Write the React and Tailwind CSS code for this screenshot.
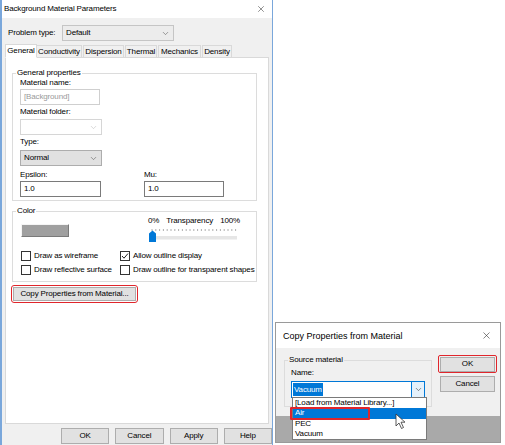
import { X, ChevronDown } from 'lucide-react'

const font = { fontFamily: '"Liberation Sans", "Noto Sans", Arial, sans-serif' }

function Combo({ value, className = '', bg = 'bg-white', disabled }) {
  return (
    <div className={`flex items-center justify-between border border-[#adadad] ${bg} ${className}`}>
      <span className={`pl-[3px] ${disabled ? 'text-[#a0a0a0]' : 'text-black'}`}>{value}</span>
      <ChevronDown size={9} strokeWidth={1.5} className={disabled ? 'mr-[3px] text-[#bdbdbd]' : 'mr-[3px] text-[#555]'} />
    </div>
  )
}

function Input({ value, className = '', muted }) {
  return (
    <div className={`flex items-center border bg-white pl-[3px] ${muted ? 'border-[#cfcfcf] text-[#9a9a9a]' : 'border-[#7a7a7a] text-black'} ${className}`}>
      {value}
    </div>
  )
}

function Check({ label, checked, className = '' }) {
  return (
    <div className={`flex h-[11px] items-center gap-[3px] ${className}`}>
      <div className="flex h-[10px] w-[10px] shrink-0 items-center justify-center border border-[#333] bg-white">
        {checked && (
          <svg width="8" height="8" viewBox="0 0 8 8">
            <path d="M1 4 L3 6.2 L7 1.5" fill="none" stroke="#222" strokeWidth="1" />
          </svg>
        )}
      </div>
      <span className="text-black">{label}</span>
    </div>
  )
}

function WinButton({ label, className = '' }) {
  return (
    <div className={`flex items-center justify-center border border-[#adadad] bg-[#e1e1e1] text-black ${className}`}>
      {label}
    </div>
  )
}

function Tab({ label, active, className = '' }) {
  return (
    <div
      className={`flex items-center justify-center border border-[#d9d9d9] ${
        active ? 'relative z-10 -mb-px h-[14px] border-b-white bg-white' : 'h-[12px] border-b-0 bg-[#f0f0f0]'
      } ${className}`}
    >
      {label}
    </div>
  )
}

function MainDialog() {
  return (
    <div className="flex h-[445px] w-[273px] shrink-0 flex-col border-l-2 border-r border-[#7aa7db] bg-[#f0f0f0]">
      {/* title bar */}
      <div className="flex h-[18px] items-center justify-between bg-white pl-[2px] pr-[6px]">
        <span>Background Material Parameters</span>
        <X size={10} strokeWidth={1.3} className="text-[#333]" />
      </div>

      {/* problem type */}
      <div className="mt-[7px] flex items-center pl-[6px]">
        <span className="w-[54px]">Problem type:</span>
        <Combo value="Default" className="h-[16px] w-[112px] border-[#c5c5c5]" bg="bg-[#ececec]" />
      </div>

      {/* tabs */}
      <div className="mt-[3px] flex items-end pl-[3px]">
        <Tab label="General" active className="w-[32px]" />
        <Tab label="Conductivity" className="w-[45px] border-l-0" />
        <Tab label="Dispersion" className="ml-px w-[41px]" />
        <Tab label="Thermal" className="ml-px w-[32px]" />
        <Tab label="Mechanics" className="ml-px w-[43px]" />
        <Tab label="Density" className="ml-px w-[30px]" />
      </div>

      {/* tab panel */}
      <div className="mx-[3px] flex h-[367px] flex-col border border-[#d9d9d9] bg-white pl-[6px] pt-[10px]">
        <fieldset className="h-[133px] w-[245px] border border-[#dcdcdc] pl-[7px]">
          <legend className="-ml-[4px] px-[1px]">General properties</legend>
          <div>Material name:</div>
          <Input value="[Background]" muted className="mt-px h-[16px] w-[80px]" />
          <div className="mt-[2px]">Material folder:</div>
          <Combo value="" disabled className="mt-[2px] h-[16px] w-[82px] border-[#d6d6d6]" />
          <div className="mt-[2px]">Type:</div>
          <Combo value="Normal" className="mt-[3px] h-[16px] w-[82px]" bg="bg-[#e1e1e1]" />
          <div className="mt-[4px] flex">
            <div className="w-[124px]">
              <div>Epsilon:</div>
              <Input value="1.0" className="mt-px h-[16px] w-[81px]" />
            </div>
            <div>
              <div>Mu:</div>
              <Input value="1.0" className="mt-px h-[16px] w-[80px]" />
            </div>
          </div>
        </fieldset>

        <fieldset className="mt-[5px] h-[76px] w-[245px] border border-[#dcdcdc] pl-[8px]">
          <legend className="-ml-[5px] px-[1px]">Color</legend>
          <div className="flex">
            <div className="mt-[8px] h-[13px] w-[48px] border border-b-[#7a7a7a] border-l-[#f5f5f5] border-r-[#7a7a7a] border-t-[#f5f5f5] bg-[#a0a0a0]" />
            <div className="ml-[79px] flex w-[92px] flex-col">
              <div className="flex justify-between">
                <span>0%</span>
                <span>Transparency</span>
                <span>100%</span>
              </div>
              <svg width="92" height="16" viewBox="0 0 92 16" className="mt-[2px]">
                {Array.from({ length: 23 }).map((_, i) => (
                  <line key={i} x1={4 + i * 3.8} y1="1" x2={4 + i * 3.8} y2="3" stroke="#9a9a9a" strokeWidth="0.8" />
                ))}
                <rect x="3" y="8" width="86" height="3.5" fill="#e6e6e6" />
                <path d="M1 5.5 L4.5 2.5 L8 5.5 L8 14 L1 14 Z" fill="#0078d7" />
              </svg>
            </div>
          </div>
          <div className="mt-[6px] flex">
            <div className="w-[99px]">
              <Check label="Draw as wireframe" />
              <Check label="Draw reflective surface" className="mt-[3px]" />
            </div>
            <div>
              <Check label="Allow outline display" checked />
              <Check label="Draw outline for transparent shapes" className="mt-[3px]" />
            </div>
          </div>
        </fieldset>

        <div className="-ml-px mt-[3px] flex h-[18px] w-[127px] items-center justify-center rounded-[3px] border border-[#e0262c] p-px">
          <WinButton label="Copy Properties from Material..." className="h-full w-full" />
        </div>
      </div>

      {/* bottom buttons */}
      <div className="mt-[4px] flex gap-[6px] pl-[59px]">
        <WinButton label="OK" className="h-[16px] w-[49px] border-[#0078d7]" />
        <WinButton label="Cancel" className="h-[16px] w-[49px]" />
        <WinButton label="Apply" className="h-[16px] w-[49px]" />
        <WinButton label="Help" className="h-[16px] w-[49px]" />
      </div>
    </div>
  )
}

function CopyDialog() {
  return (
    <div className="relative mt-[322px] flex h-[121px] w-[226px] flex-col border border-[#9a9a9a] bg-[#a9a9a9]">
      <div className="flex h-[25px] items-center justify-between bg-white pl-[7px] pr-[8px]">
        <span className="text-[9px] tracking-normal">Copy Properties from Material</span>
        <X size={11} strokeWidth={1.3} className="text-[#333]" />
      </div>
      <div className="flex h-[68px] bg-[#f0f0f0] pl-[8px] pt-[7px]">
        <fieldset className="h-[52px] w-[148px] border border-[#dcdcdc] pl-[6px]">
          <legend className="-ml-[3px] px-[1px]">Source material</legend>
          <div className="mt-[3px]">Name:</div>
          <div className="mt-[3px] flex h-[17px] w-[134px] items-center justify-between border border-[#0078d7] bg-white">
            <span className="ml-[1px] bg-[#0078d7] px-[1px] leading-[13px] text-white">Vacuum</span>
            <div className="flex h-full w-[13px] items-center justify-center border-l border-[#0078d7] bg-[#e5f1fb]">
              <ChevronDown size={9} strokeWidth={1.5} className="text-[#333]" />
            </div>
          </div>
        </fieldset>
        <div className="ml-[6px] flex flex-col">
          <div className="flex h-[18px] w-[59px] items-center justify-center rounded-[2px] border border-[#e0262c]">
            <WinButton label="OK" className="h-[15px] w-[55px] border-[#0078d7]" />
          </div>
          <WinButton label="Cancel" className="ml-[2px] mt-[3px] h-[16px] w-[55px]" />
        </div>
      </div>

      {/* open dropdown list */}
      <div className="absolute left-[16px] top-[74px] flex w-[135px] flex-col border border-[#7a7a7a] bg-white text-black">
        <div className="h-[10px] pl-[2px]">[Load from Material Library...]</div>
        <div className="relative h-[11px] bg-[#0078d7] pl-[2px] text-white">
          Air
          <div className="absolute -left-[3px] -top-px h-[13px] w-[80px] rounded-[1px] border-2 border-[#e0262c]" />
        </div>
        <div className="h-[10px] pl-[2px]">PEC</div>
        <div className="h-[10px] pl-[2px]">Vacuum</div>
      </div>

      {/* mouse cursor */}
      <svg width="12" height="17" viewBox="0 0 12 17" className="absolute left-[119px] top-[90px]">
        <path d="M1 1 L1 13 L4 10 L6.5 15.5 L8.5 14.5 L6 9.2 L10 9.2 Z" fill="white" stroke="#333" strokeWidth="0.8" />
      </svg>
    </div>
  )
}

export default function App() {
  return (
    <div
      className="flex h-[445px] w-[505px] overflow-hidden whitespace-nowrap bg-white text-[8px] leading-[10px] tracking-[-0.15px] text-black"
      style={font}
    >
      <MainDialog />
      <div className="ml-[2px]">
        <CopyDialog />
      </div>
    </div>
  )
}
